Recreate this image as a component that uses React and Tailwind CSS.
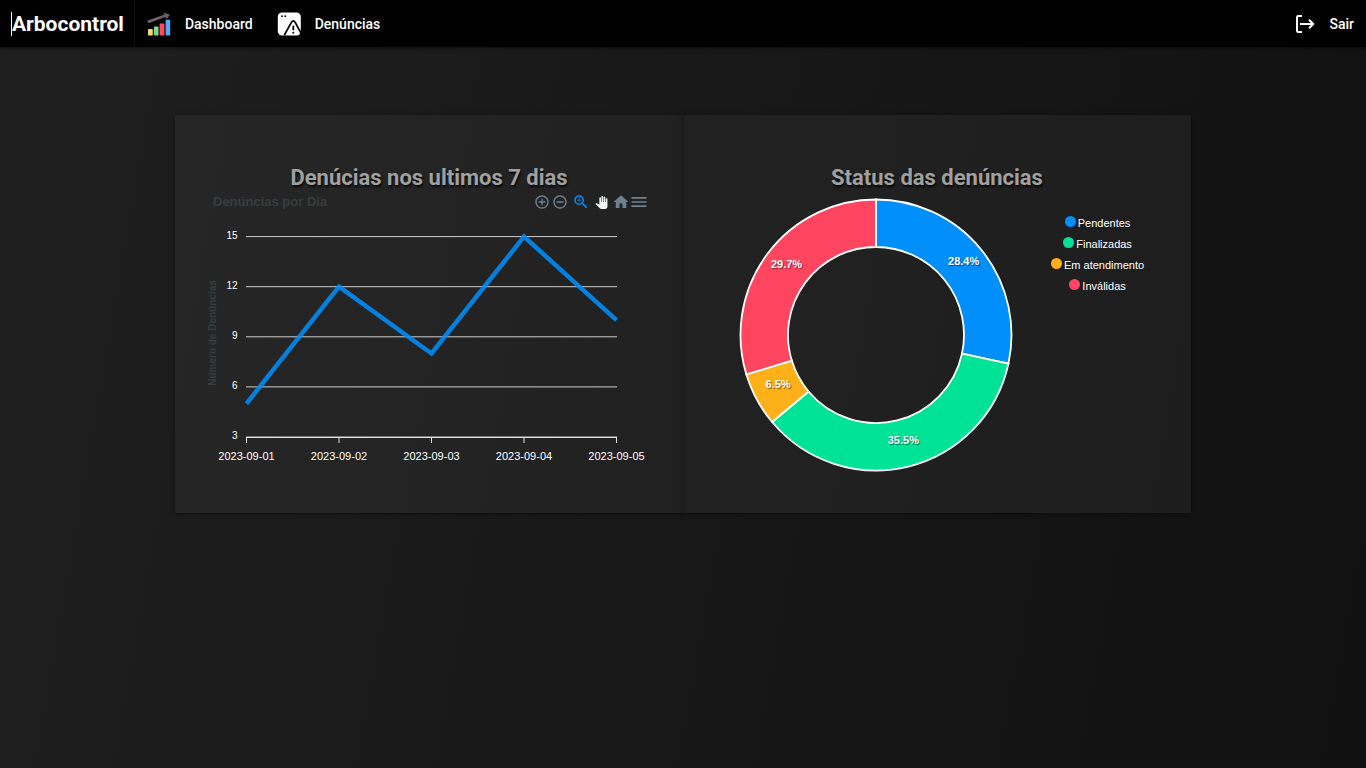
import { MdAddCircleOutline, MdRemoveCircleOutline, MdZoomIn, MdPanTool, MdHome, MdMenu } from "react-icons/md";

const days = [
  { date: "2023-09-01", count: 5 },
  { date: "2023-09-02", count: 12 },
  { date: "2023-09-03", count: 8 },
  { date: "2023-09-04", count: 15 },
  { date: "2023-09-05", count: 10 },
];

const statuses = [
  { label: "Pendentes", share: 28.4, text: "28.4%", fill: "#008ffb", dot: "bg-[#008ffb]" },
  { label: "Finalizadas", share: 35.5, text: "35.5%", fill: "#00e396", dot: "bg-[#00e396]" },
  { label: "Em atendimento", share: 6.4, text: "6.5%", fill: "#feb019", dot: "bg-[#feb019]" },
  { label: "Inválidas", share: 29.7, text: "29.7%", fill: "#ff4560", dot: "bg-[#ff4560]" },
];

const tools = [
  { name: "Ampliar", Icon: MdAddCircleOutline, style: "w-[18px] text-[#6e8192]", size: 16 },
  { name: "Reduzir", Icon: MdRemoveCircleOutline, style: "w-[18px] text-[#6e8192]", size: 16 },
  { name: "Zoom por seleção", Icon: MdZoomIn, style: "w-6 text-[#008ffb]", size: 18 },
  { name: "Mover", Icon: MdPanTool, style: "w-4 text-[#f3f4f5]", size: 13 },
  { name: "Restaurar", Icon: MdHome, style: "w-6 text-[#6e8192]", size: 18 },
  { name: "Menu", Icon: MdMenu, style: "w-3 text-[#6e8192]", size: 20 },
];

function ChartIcon() {
  return (
    <svg width="24" height="24" viewBox="0 0 24 24" aria-hidden="true">
      <path d="M1.8 9.6 18 3.8" stroke="#6b5f68" strokeWidth="2.8" strokeLinecap="round" />
      <path d="M16.4.6 23 2.8 19.4 7.2z" fill="#6b5f68" />
      <rect x="1" y="17" width="4.8" height="6.5" rx=".8" fill="#fbd561" />
      <rect x="6.9" y="14.6" width="4.6" height="8.9" rx=".8" fill="#7cdc92" />
      <rect x="12.6" y="11.6" width="4.8" height="11.9" rx=".8" fill="#fc4b5f" />
      <rect x="18.6" y="7.8" width="4.6" height="15.7" rx=".8" fill="#55a9fb" />
    </svg>
  );
}

function ReportIcon() {
  return (
    <svg width="24" height="24" viewBox="0 0 24 24" aria-hidden="true">
      <rect x=".8" y=".5" width="23" height="23" rx="4.2" fill="#fff" />
      <circle cx="5" cy="4.2" r=".9" fill="#000" />
      <circle cx="8.3" cy="4.2" r=".9" fill="#000" />
      <path d="M7.4 23.5Q7.6 22.6 8 21.8L14.4 10.4Q16.3 7.2 18.2 10.4L24 21" fill="none" stroke="#000" strokeWidth="1.8" />
      <path d="M16.3 13.6v4.6" stroke="#000" strokeWidth="1.8" />
      <circle cx="16.3" cy="20.8" r="1" fill="#000" />
    </svg>
  );
}

function ExitIcon() {
  return (
    <svg width="20" height="20" viewBox="0 0 20 20" fill="none" stroke="#fff" strokeWidth="2" aria-hidden="true">
      <path d="M7 2H3.2Q2 2 2 3.2V16.8Q2 18 3.2 18H7" />
      <path d="M5 10h13M14 5.8 18.2 10 14 14.2" />
    </svg>
  );
}

function LineChart() {
  const x = (i) => 39.5 + i * 92.5;
  const y = (v) => 222 - (v - 3) * 16.7;
  return (
    <svg viewBox="0 0 444 262" className="block w-full overflow-visible font-['Liberation_Sans',Arial,sans-serif]" role="img" aria-label="Denúncias por Dia">
      {[15, 12, 9, 6, 3].map((v) => (
        <g key={v}>
          <path d={`M39 ${y(v)}H410`} stroke="#e0e0e0" strokeOpacity=".9" />
          <text x="30.5" y={y(v) + 2} textAnchor="end" fontSize="10" fill="#fff">{v}</text>
        </g>
      ))}
      <path d="M39 222.5H410" stroke="#e0e0e0" />
      {days.map((d, i) => (
        <g key={d.date}>
          <path d={`M${x(i)} 222v6`} stroke="#e0e0e0" />
          <text x={x(i)} y="245" textAnchor="middle" fontSize="11" fill="#fff">{d.date}</text>
        </g>
      ))}
      <text transform="translate(9 118) rotate(-90)" textAnchor="middle" fontSize="10" fontWeight="bold" fill="#373d3f">
        Número de Denúncias
      </text>
      <polyline points={days.map((d, i) => `${x(i)},${y(d.count)}`).join(" ")} fill="none" stroke="#008ffb" strokeOpacity=".87" strokeWidth="4.5" />
    </svg>
  );
}

function polar(r, pct) {
  const a = (pct / 100) * 2 * Math.PI;
  return [138 + r * Math.sin(a), 138 - r * Math.cos(a)];
}

function DonutChart() {
  let start = 0;
  const slices = statuses.map((s) => {
    const end = start + s.share;
    const large = s.share > 50 ? 1 : 0;
    const d = `M${polar(135.5, start)}A135.5 135.5 0 ${large} 1 ${polar(135.5, end)}L${polar(88, end)}A88 88 0 ${large} 0 ${polar(88, start)}Z`;
    const [lx, ly] = polar(112, (start + end) / 2);
    start = end;
    return { ...s, d, lx, ly };
  });
  return (
    <svg width="276" height="276" viewBox="0 0 276 276" className="shrink-0 font-['Liberation_Sans',Arial,sans-serif]" role="img" aria-label="Status das denúncias">
      {slices.map((s) => (
        <path key={s.label} d={s.d} fill={s.fill} stroke="#fff" strokeWidth="1.8" />
      ))}
      {slices.map((s) => (
        <text key={s.label} x={s.lx + 0.5} y={s.ly} textAnchor="middle" fontSize="11" fontWeight="bold" fill="#fff" className="[text-shadow:1px_1px_1px_rgba(0,0,0,0.5)]">
          {s.text}
        </text>
      ))}
    </svg>
  );
}

function Card({ title, children }) {
  return (
    <section className="bg-white/[0.045] pt-[47px] pb-9 shadow-[0_1px_4px_rgba(0,0,0,0.5)]">
      <h2 className="text-center text-[22px] leading-8 font-bold text-[#a0a0a0] [text-shadow:1px_2px_2px_rgba(0,0,0,0.8)]">{title}</h2>
      {children}
    </section>
  );
}

export default function App() {
  return (
    <div className="min-h-screen bg-[linear-gradient(100deg,#1f1f1f,#111111)] font-[Roboto,sans-serif] text-white">
      <nav className="flex h-[47px] items-stretch bg-black/95 text-sm shadow-[0_1px_3px_rgba(0,0,0,0.5)]">
        <a href="#inicio" className="flex items-center border-r border-[#101010] pr-2.5 pl-[11px]">
          <span className="border-l border-white text-[21px] leading-6 font-bold">Arbocontrol</span>
        </a>
        <a href="#dashboard" className="flex items-center gap-3.5 px-3 font-medium">
          <ChartIcon />
          Dashboard
        </a>
        <a href="#denuncias" className="flex items-center gap-3.5 px-3 font-medium">
          <ReportIcon />
          Denúncias
        </a>
        <button type="button" className="ml-auto flex items-center gap-3.5 px-3 font-medium">
          <ExitIcon />
          Sair
        </button>
      </nav>

      <main className="mx-auto mt-[68px] grid max-w-[1016px] grid-cols-2">
        <Card title="Denúcias nos ultimos 7 dias">
          <div className="px-8">
            <div className="mb-[5px] flex h-4 items-center justify-between pr-2 pl-1.5">
              <h3 className="font-['Liberation_Sans',Arial,sans-serif] text-[13px] font-bold text-[#373d3f]">Denúncias por Dia</h3>
              <div className="-mr-0.5 flex items-center">
                {tools.map(({ name, Icon, style, size }) => (
                  <button key={name} type="button" aria-label={name} className={`flex h-4 items-center justify-center ${style}`}>
                    <Icon size={size} className="shrink-0" />
                  </button>
                ))}
              </div>
            </div>
            <LineChart />
          </div>
        </Card>

        <Card title="Status das denúncias">
          <div className="flex gap-[37px] pt-[3px] pl-[55px]">
            <DonutChart />
            <ul className="flex flex-col items-center pt-4 font-['Liberation_Sans',Arial,sans-serif] text-[11px] leading-[21px]">
              {statuses.map((s) => (
                <li key={s.label} className="flex gap-0.5 whitespace-nowrap">
                  <span className={`mt-[3px] size-[11px] rounded-full ${s.dot}`} />
                  {s.label}
                </li>
              ))}
            </ul>
          </div>
        </Card>
      </main>
    </div>
  );
}
